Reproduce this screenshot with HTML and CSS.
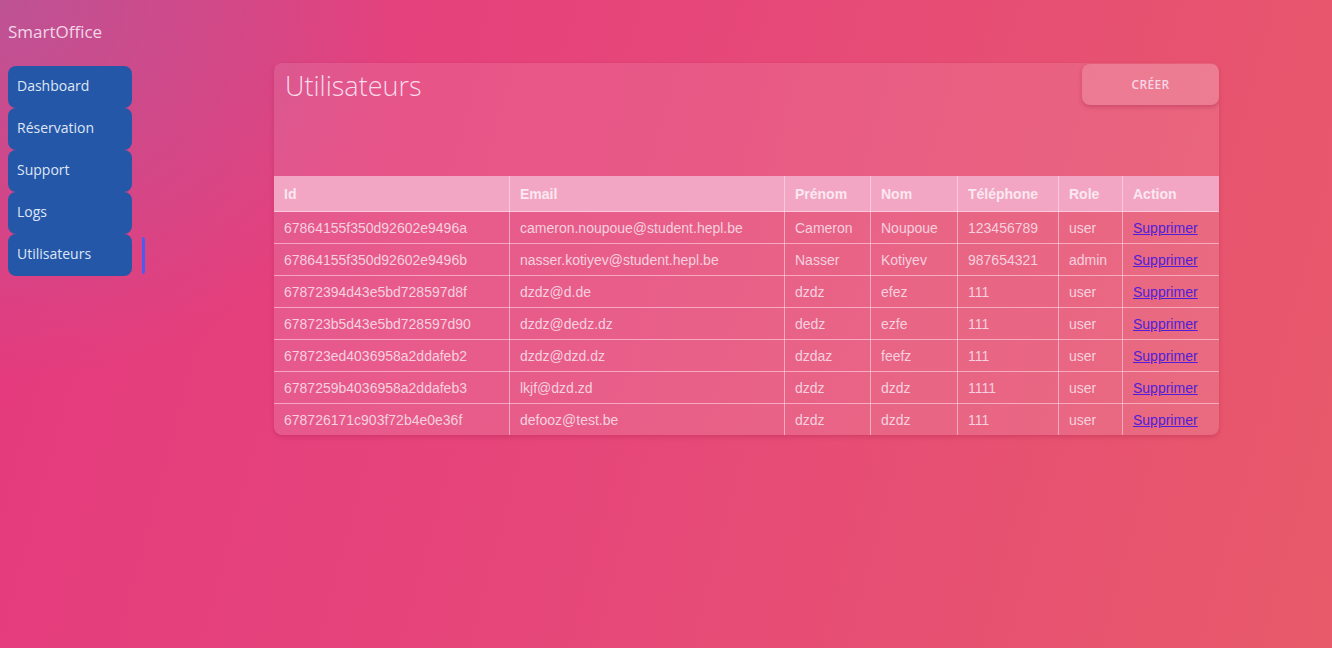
FILE: index.html
```html
<!DOCTYPE html>
<html lang="fr">
<head>
<meta charset="utf-8">
<title>SmartOffice - Utilisateurs</title>
<link rel="stylesheet" href="styles.css">
</head>
<body>
<div class="app">
  <aside class="side">
    <div class="brand">SmartOffice</div>
    <nav class="nav">
      <a class="nav-item" href="#">Dashboard</a>
      <a class="nav-item" href="#">Réservation</a>
      <a class="nav-item" href="#">Support</a>
      <a class="nav-item" href="#">Logs</a>
      <a class="nav-item active" href="#">Utilisateurs</a>
    </nav>
  </aside>
  <main class="main">
    <section class="card">
      <div class="card-head">
        <h1 class="title">Utilisateurs</h1>
        <button class="btn">CRÉER</button>
      </div>
      <table class="users">
        <thead>
          <tr><th class="c-id">Id</th><th class="c-email">Email</th><th class="c-pre">Prénom</th><th class="c-nom">Nom</th><th class="c-tel">Téléphone</th><th class="c-role">Role</th><th class="c-act">Action</th></tr>
        </thead>
        <tbody>
          <tr><td>67864155f350d92602e9496a</td><td>cameron.noupoue@student.hepl.be</td><td>Cameron</td><td>Noupoue</td><td>123456789</td><td>user</td><td><a href="#">Supprimer</a></td></tr>
          <tr><td>67864155f350d92602e9496b</td><td>nasser.kotiyev@student.hepl.be</td><td>Nasser</td><td>Kotiyev</td><td>987654321</td><td>admin</td><td><a href="#">Supprimer</a></td></tr>
          <tr><td>67872394d43e5bd728597d8f</td><td>dzdz@d.de</td><td>dzdz</td><td>efez</td><td>111</td><td>user</td><td><a href="#">Supprimer</a></td></tr>
          <tr><td>678723b5d43e5bd728597d90</td><td>dzdz@dedz.dz</td><td>dedz</td><td>ezfe</td><td>111</td><td>user</td><td><a href="#">Supprimer</a></td></tr>
          <tr><td>678723ed4036958a2ddafeb2</td><td>dzdz@dzd.dz</td><td>dzdaz</td><td>feefz</td><td>111</td><td>user</td><td><a href="#">Supprimer</a></td></tr>
          <tr><td>6787259b4036958a2ddafeb3</td><td>lkjf@dzd.zd</td><td>dzdz</td><td>dzdz</td><td>1111</td><td>user</td><td><a href="#">Supprimer</a></td></tr>
          <tr><td>678726171c903f72b4e0e36f</td><td>defooz@test.be</td><td>dzdz</td><td>dzdz</td><td>111</td><td>user</td><td><a href="#">Supprimer</a></td></tr>
        </tbody>
      </table>
    </section>
  </main>
</div>
</body>
</html>
```

FILE: styles.css
```css
html, body {
  margin: 0;
  height: 100%;
}
body {
  font-family: "Open Sans", "Noto Sans", sans-serif;
  background:
    radial-gradient(ellipse 420px 380px at 0% 0%, rgba(176, 92, 156, 0.75), rgba(176, 92, 156, 0) 100%),
    linear-gradient(105deg, #e4397e 0%, #e6467a 45%, #e85a6a 100%);
  min-height: 648px;
}
.app {
  display: flex;
  align-items: flex-start;
  padding-left: 8px;
}
.side {
  width: 138px;
  flex: none;
}
.brand {
  color: #f3d6e8;
  font-size: 17px;
  height: 66px;
  line-height: 64px;
  box-sizing: border-box;
}
.nav {
  display: flex;
  flex-direction: column;
}
.nav-item {
  position: relative;
  display: block;
  width: 124px;
  height: 42px;
  box-sizing: border-box;
  padding-left: 9px;
  line-height: 40px;
  font-size: 14px;
  color: #dfe6f5;
  text-decoration: none;
  background: #2557a8;
  border-radius: 8px;
}
.nav-item.active::after {
  content: "";
  position: absolute;
  left: 134px;
  top: 3px;
  width: 3px;
  height: 37px;
  background: #4b5cf0;
  border-radius: 0 4px 4px 0;
}
.main {
  margin-left: 128px;
  padding-top: 63px;
  width: 945px;
  flex: none;
}
.card {
  background: rgba(255, 255, 255, 0.1);
  border-radius: 8px;
  box-shadow: 0 2px 4px rgba(150, 20, 60, 0.25);
  overflow: hidden;
}
.card-head {
  display: flex;
  justify-content: space-between;
  align-items: flex-start;
  height: 113px;
}
.title {
  margin: 5px 0 0 11px;
  font-weight: 300;
  font-size: 27px;
  color: #f8dbea;
  line-height: 36px;
}
.btn {
  width: 137px;
  height: 41px;
  margin-top: 1px;
  border: none;
  border-radius: 8px;
  background: rgba(255, 255, 255, 0.16);
  box-shadow: 0 2px 4px rgba(140, 20, 60, 0.3);
  color: #f8d6e4;
  font-family: "Open Sans", "Noto Sans", sans-serif;
  font-size: 12px;
  font-weight: 600;
  letter-spacing: 0.3px;
}
.users {
  width: 100%;
  border-collapse: collapse;
  font-family: "Liberation Sans", Arial, sans-serif;
  font-size: 14px;
  color: #f6d0df;
}
.users th, .users td {
  border: 1px solid rgba(255, 230, 240, 0.55);
  text-align: left;
  padding: 0 10px;
}
.users tr > :first-child { border-left: none; }
.users tr > :last-child { border-right: none; }
.users th {
  background: #f2a6c3;
  color: #fbe8f0;
  font-weight: bold;
  height: 35px;
  border-top: none;
}
.users td {
  height: 31px;
  background: rgba(255, 255, 255, 0.03);
}
.users tbody tr:last-child td { border-bottom: none; }
.users a {
  color: #4d1fd6;
}
.c-id { width: 215px; }
.c-email { width: 254px; }
.c-pre { width: 65px; }
.c-nom { width: 66px; }
.c-tel { width: 80px; }
.c-role { width: 43px; }
```
